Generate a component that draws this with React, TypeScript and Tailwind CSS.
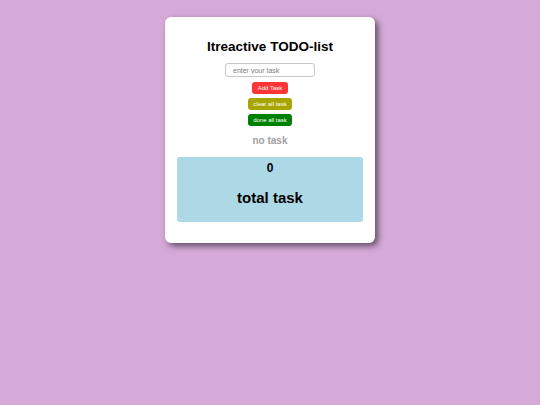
export default function App() {
  return (
    <div className="min-h-[405px] w-full bg-[#d5a9d8] pt-[17px] font-['Liberation_Sans',Arial,sans-serif]">
      <div className="mx-auto flex w-[210px] flex-col items-center rounded-md bg-white px-3 pb-[21px] pt-[21px] shadow-[3px_3px_6px_rgba(0,0,0,0.55)]">
        <h1 className="text-[13.5px] font-bold leading-[17px] text-black">Itreactive TODO-list</h1>
        <input
          placeholder="enter your task"
          className="mt-[8px] h-[14px] w-[90px] rounded-[3px] border border-[#c8c8c8] px-[7px] text-[7px] text-gray-700 outline-none placeholder:text-[#808080]"
        />
        <button className="mt-[5px] h-[12px] w-[36px] rounded-[3px] bg-[#ff3535] text-[6px] text-white">
          Add Task
        </button>
        <button className="mt-[4px] h-[12px] w-[44px] rounded-[3px] bg-[#a8a500] text-[6px] text-white">
          clear all task
        </button>
        <button className="mt-[4px] h-[12px] w-[44px] rounded-[3px] bg-[#008000] text-[6px] text-white">
          done all task
        </button>
        <p className="mt-[8px] text-[10px] font-bold leading-[14px] text-[#a0a0a0]">no task</p>
        <div className="mt-[9px] flex h-[65px] w-full flex-col items-center rounded-[3px] bg-[#add8e6] pt-[4px]">
          <span className="text-[12px] font-bold leading-[15px] text-black">0</span>
          <span className="mt-[12px] text-[15px] font-bold leading-[19px] text-black">total task</span>
        </div>
      </div>
    </div>
  )
}
